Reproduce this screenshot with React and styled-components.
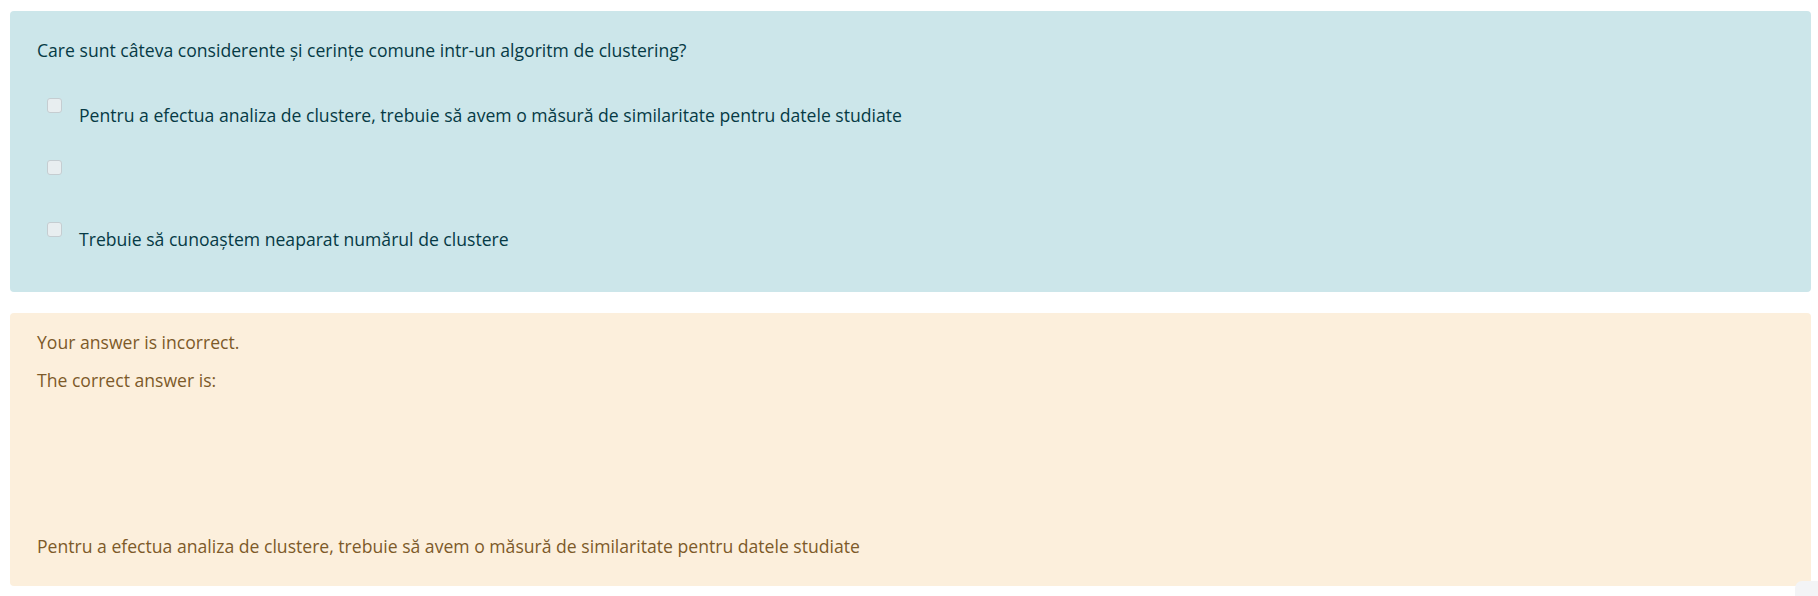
import React from "react";
import styled, { createGlobalStyle } from "styled-components";

const GlobalStyle = createGlobalStyle`
  html, body { margin: 0; padding: 0; background: #ffffff; }
  body {
    font-family: "Open Sans", "Noto Sans", sans-serif;
    font-size: 17.6px;
    line-height: 28px;
  }
`;

const Page = styled.main`
  padding: 11px 7px 10px 10px;
  display: flex;
  flex-direction: column;
  gap: 21px;
`;

const Formulation = styled.section`
  background: #cce6ea;
  color: #063a45;
  border-radius: 4px;
  padding: 25px 27px 39px 27px;
`;

const QuestionText = styled.div`
  margin: 0;
`;

const AnswerList = styled.div`
  margin: 34px 0 0 10px;
  display: flex;
  flex-direction: column;
  gap: 31px;
`;

const AnswerRow = styled.div`
  display: flex;
  align-items: flex-start;
  gap: 17px;
`;

const Checkbox = styled.span`
  flex: none;
  width: 15px;
  height: 15px;
  box-sizing: border-box;
  border: 1px solid #c5cdd1;
  border-radius: 3px;
  background: #e8eef0;
`;

const AnswerLabel = styled.div`
  padding-top: 3px;
  min-height: 28px;
`;

const Outcome = styled.section`
  background: #fcefdc;
  color: #7d5a29;
  border-radius: 4px;
  padding: 15px 27px 26px 27px;
`;

const Feedback = styled.div`
  margin-bottom: 10px;
`;

const RightAnswer = styled.div``;

const CorrectItem = styled.div`
  margin-top: ${(p) => p.$offset}px;
`;

const FooterButton = styled.div`
  position: absolute;
  left: 1795px;
  top: 581px;
  width: 40px;
  height: 40px;
  border-radius: 7px;
  background: #f3f4f6;
`;

const answers = [
  "Pentru a efectua analiza de clustere, trebuie să avem o măsură de similaritate pentru datele studiate",
  "",
  "Trebuie să cunoaștem neaparat numărul de clustere",
];

export default function App() {
  return (
    <>
      <GlobalStyle />
      <Page>
        <Formulation>
          <QuestionText>
            Care sunt câteva considerente și cerințe comune intr-un algoritm de clustering?
          </QuestionText>
          <AnswerList>
            {answers.map((a, i) => (
              <AnswerRow key={i}>
                <Checkbox />
                <AnswerLabel>{a}</AnswerLabel>
              </AnswerRow>
            ))}
          </AnswerList>
        </Formulation>
        <Outcome>
          <Feedback>Your answer is incorrect.</Feedback>
          <RightAnswer>
            The correct answer is:
            <CorrectItem $offset={138}>
              Pentru a efectua analiza de clustere, trebuie să avem o măsură de similaritate pentru datele studiate
            </CorrectItem>
          </RightAnswer>
        </Outcome>
      </Page>
      <FooterButton />
    </>
  );
}
